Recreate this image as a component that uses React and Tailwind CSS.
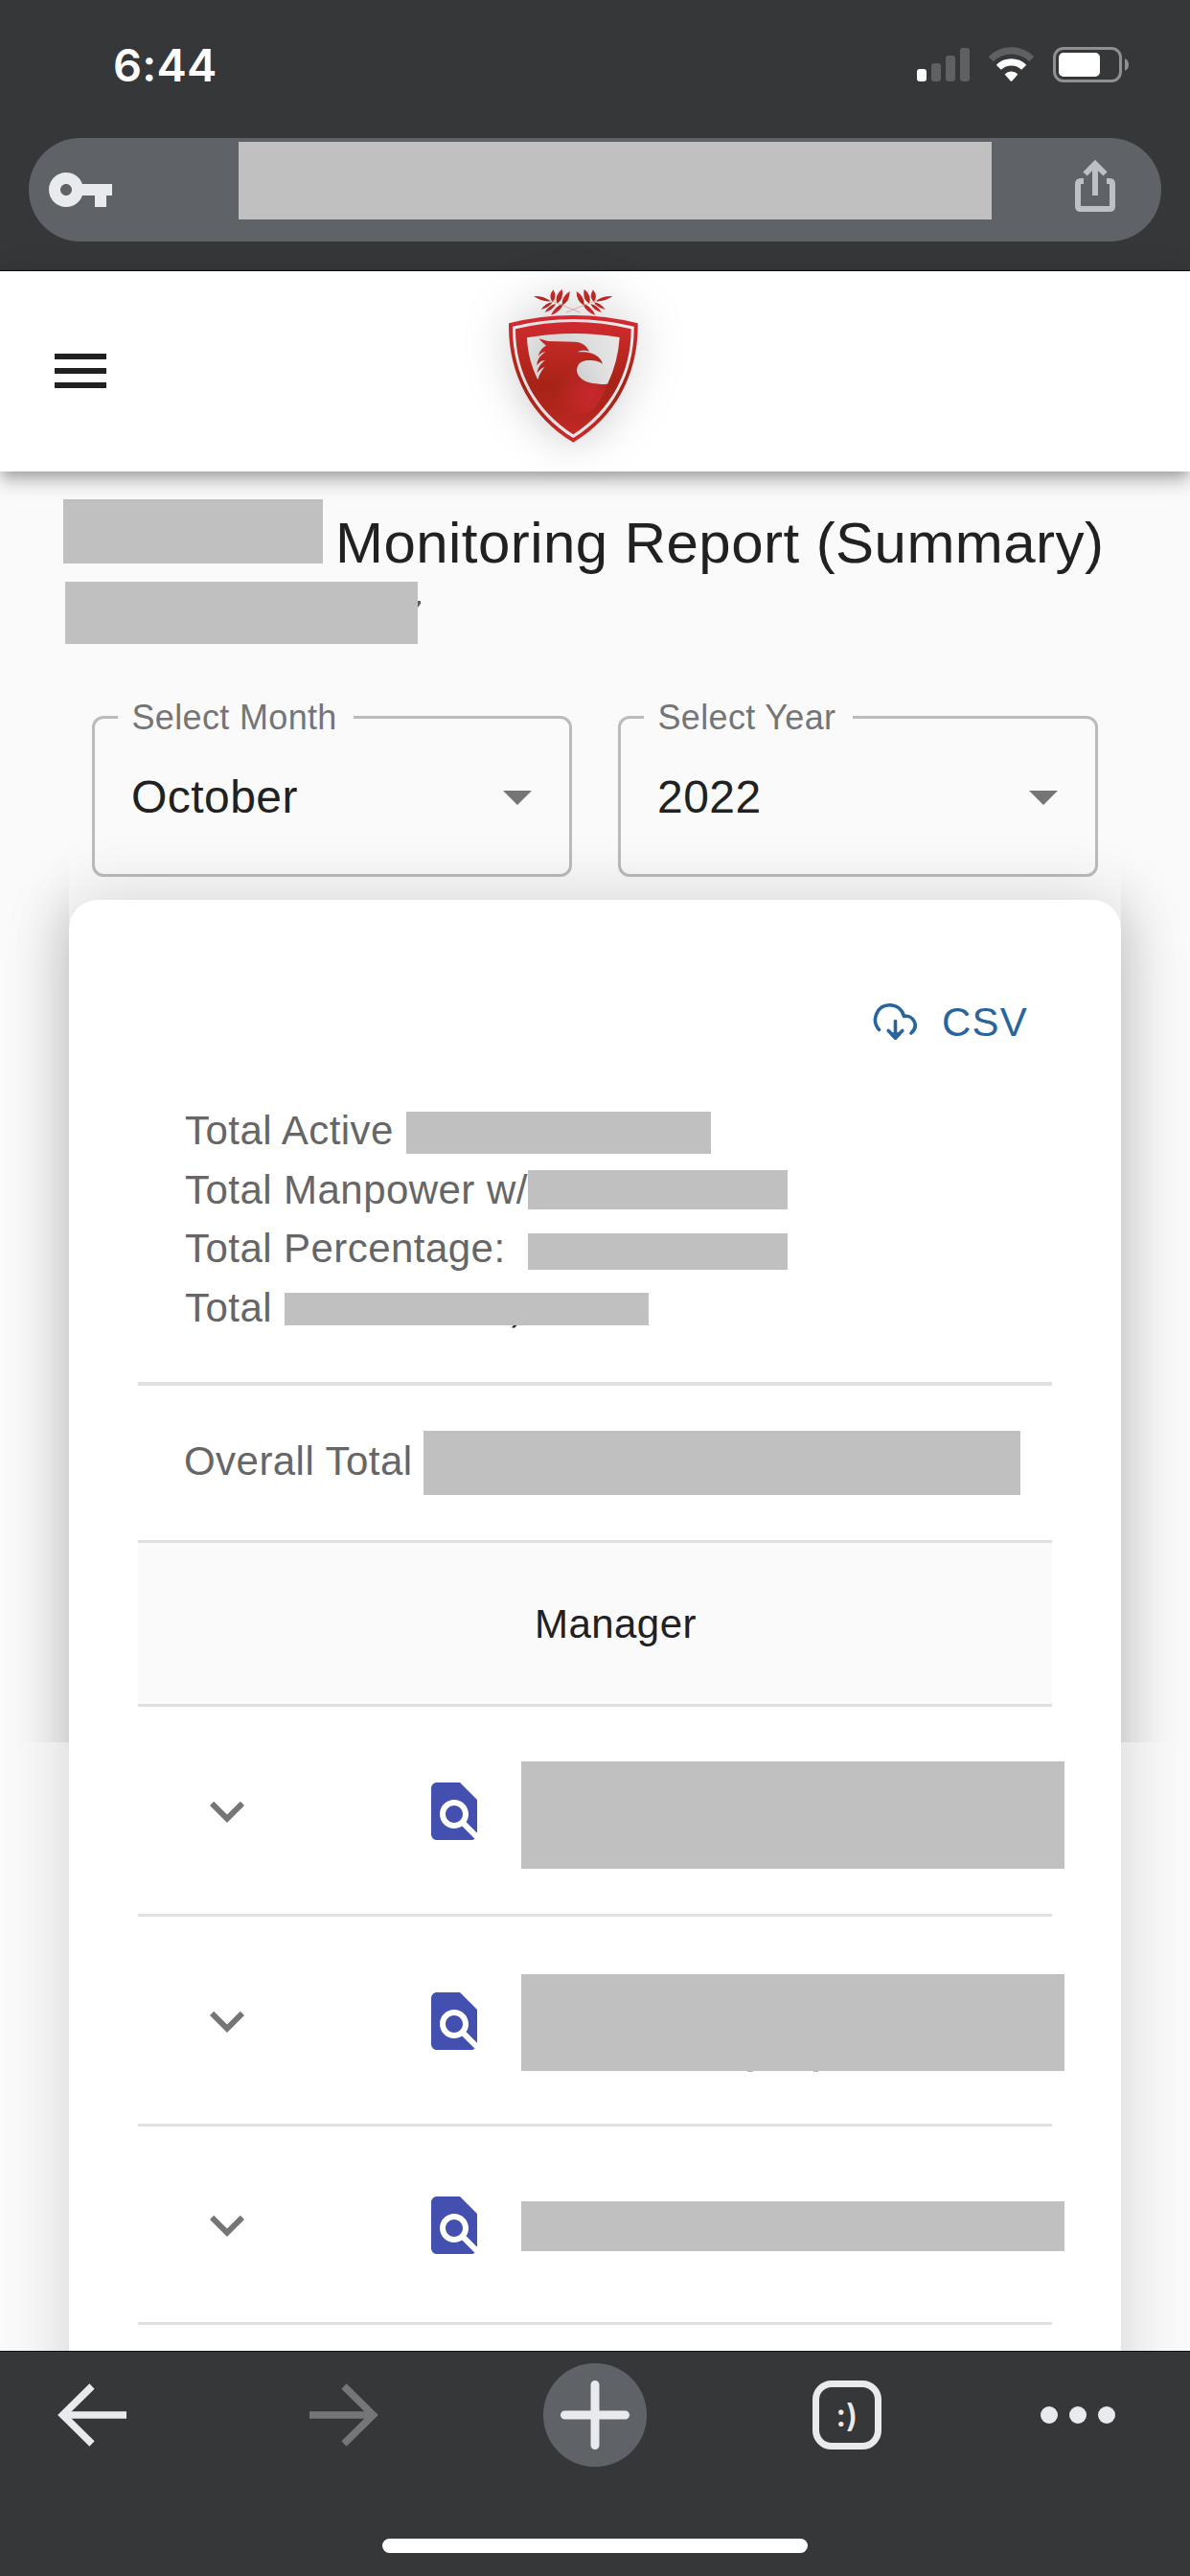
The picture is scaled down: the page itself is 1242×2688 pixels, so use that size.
import React from "react";
import { MdVpnKey, MdMenu, MdArrowDropDown, MdExpandMore, MdFindInPage } from "react-icons/md";

const LEAVES = [
  [224, 103, 171, 87, 8],
  [230, 106, 194, 129, 7],
  [240, 111, 206, 138, 8],
  [264, 111, 225, 147, 10],
  [230, 106, 232, 67, 12],
  [244, 110, 260, 65, 13],
  [260, 116, 284, 72, 12],
];

function leafPath([bx, by, tx, ty, w]) {
  const dx = tx - bx;
  const dy = ty - by;
  const len = Math.hypot(dx, dy);
  const nx = (-dy / len) * w * 1.3;
  const ny = (dx / len) * w * 1.3;
  const mx = bx + dx * 0.45;
  const my = by + dy * 0.45;
  return `M${bx},${by} Q${mx + nx},${my + ny} ${tx},${ty} Q${mx - nx},${my - ny} ${bx},${by}Z`;
}

function Laurel() {
  return (
    <g>
      {LEAVES.map((l, i) => (
        <path key={i} d={leafPath(l)} fill="url(#leaf)" />
      ))}
      <path d="M222 100 L316 138" stroke="#d98a8a" strokeWidth="2" fill="none" />
    </g>
  );
}

function Crest() {
  return (
    <svg
      className="h-[197px] w-[200px] overflow-visible drop-shadow-[0_0_24px_rgba(0,0,0,0.26)]"
      viewBox="0 9 600 591"
    >
      <defs>
        <linearGradient id="shield" x1="0" y1="147" x2="0" y2="545" gradientUnits="userSpaceOnUse">
          <stop offset="0" stopColor="#d42a33" />
          <stop offset="0.25" stopColor="#c02823" />
          <stop offset="0.55" stopColor="#a62317" />
          <stop offset="0.75" stopColor="#b0251c" />
          <stop offset="1" stopColor="#cc2a2c" />
        </linearGradient>
        <linearGradient id="leaf" x1="0" y1="65" x2="0" y2="147" gradientUnits="userSpaceOnUse">
          <stop offset="0" stopColor="#d32a33" />
          <stop offset="0.5" stopColor="#ae251c" />
          <stop offset="1" stopColor="#d32a33" />
        </linearGradient>
        <radialGradient id="glow" cx="350" cy="400" r="115" gradientUnits="userSpaceOnUse">
          <stop offset="0" stopColor="#c6282b" />
          <stop offset="0.3" stopColor="#c4282a" stopOpacity="0.85" />
          <stop offset="1" stopColor="#c4282a" stopOpacity="0" />
        </radialGradient>
      </defs>
      <Laurel />
      <g transform="translate(589 0) scale(-1 1)">
        <Laurel />
      </g>
      <path
        fillRule="evenodd"
        fill="url(#shield)"
        d="M93,172 Q295,122 497,172 C500,325 430,465 295,545 C160,465 90,325 93,172Z
           M105,182 C103,325 170,455 295,531 C420,455 487,325 485,182 Q295,136 105,182Z
           M114,190 Q295,146 476,190 C477,325 412,445 295,520 C178,445 113,325 114,190Z
           M150,217 Q295,192 440,216 Q435,295 402,362 C340,368 308,345 306,322 C306,295 325,288 345,288 C365,288 378,292 387,300 C382,277 355,262 328,262 L308,262 C322,256 335,257 345,260 C335,238 315,230 300,230 L215,228 L188,220 C193,228 203,236 210,242 C195,250 188,262 186,275 C192,266 200,262 209,262 C193,270 182,285 181,303 C190,292 198,288 207,288 C193,298 183,312 182,328 C190,316 198,311 205,309 C195,322 188,332 184,349 C163,305 152,265 150,217Z"
      />
      <path
        fill="url(#glow)"
        d="M306,287 C255,305 225,350 235,410 C240,440 255,455 275,465 L350,450 C375,425 390,395 402,362 C340,368 308,345 306,322 C306,305 312,296 322,290Z"
      />
    </svg>
  );
}

function StatusBar() {
  return (
    <div className="flex h-[144px] items-start justify-between pl-[118px] pr-[62px]">
      <div className="mt-[44px] font-['Inter',sans-serif] text-[47px] font-semibold leading-[48px] tracking-[0.2px] text-white">
        6:44
      </div>
      <div className="mt-[49px] flex items-start">
        <div className="mt-[1px] flex h-[35px] items-end gap-[5px]">
          <div className="h-[13px] w-[10px] rounded-[3px] bg-white" />
          <div className="h-[19px] w-[10px] rounded-[3px] bg-[#5f6062]" />
          <div className="h-[27px] w-[10px] rounded-[3px] bg-[#5f6062]" />
          <div className="h-[35px] w-[10px] rounded-[3px] bg-[#5f6062]" />
        </div>
        <svg className="ml-[19px] h-[37px] w-[49px]" viewBox="0 0 49 37" fill="none">
          <path d="M3.3 12.7 A30 30 0 0 1 45.7 12.7" stroke="#5f6062" strokeWidth="7.2" />
          <path d="M11.3 21.2 A18.8 18.8 0 0 1 37.7 21.2" stroke="#fff" strokeWidth="7.2" />
          <path d="M17.6 28.5 A9.6 9.6 0 0 1 31.4 28.5 L25.3 35.4 Q24.5 36.3 23.7 35.4Z" fill="#fff" />
        </svg>
        <svg className="ml-[19px] h-[37px] w-[81px]" viewBox="0 0 81 37">
          <rect x="1.5" y="1.5" width="69" height="34" rx="9.5" fill="none" stroke="#8f9091" strokeWidth="3" />
          <rect x="6" y="6" width="43" height="25" rx="5" fill="#fff" />
          <path d="M75 12 Q79 14 79 18.5 Q79 23 75 25Z" fill="#8f9091" />
        </svg>
      </div>
    </div>
  );
}

function AddressBar() {
  return (
    <div className="mx-[30px] flex h-[108px] rounded-full bg-[#5f6368]">
      <MdVpnKey className="ml-[18px] mt-[18px] h-[72px] w-[72px] shrink-0 text-[#e8eaed]" />
      <div className="ml-[129px] mt-[4px] h-[81px] w-[786px] bg-[#c0c0c0]" />
      <svg className="ml-[87px] mt-[23px] h-[55px] w-[42px]" viewBox="0 0 42 55" fill="none" stroke="#bdc1c6" strokeWidth="6">
        <path d="M9 22 H6 Q3 22 3 25 V48 Q3 51 6 51 H36 Q39 51 39 48 V25 Q39 22 36 22 H33" />
        <path d="M21 37 V5" />
        <path d="M10.5 14.5 L21 4 L31.5 14.5" />
      </svg>
    </div>
  );
}

function Field({ label, value, notch }) {
  return (
    <div className="relative flex h-[168px] w-[501px] items-center justify-between rounded-[12px] border-[3px] border-black/25 pl-[38px] pr-[18px]">
      <div
        className={`absolute left-[24px] top-[-19px] h-[36px] whitespace-nowrap bg-[#fafafa] pl-[14.5px] text-[36px] leading-[36px] tracking-[0.34px] text-[#757575] ${notch}`}
      >
        {label}
      </div>
      <div className="pt-[2px] text-[48px] leading-[48px] tracking-[0.45px]">{value}</div>
      <MdArrowDropDown className="h-[72px] w-[72px] text-[#757575]" />
    </div>
  );
}

function Stat({ label, labelWidth, block, children }) {
  return (
    <div className="relative flex h-[61.5px] items-start leading-[61.5px]">
      <div className={`shrink-0 whitespace-nowrap pt-[1px] ${labelWidth}`}>{label}</div>
      <div className={`bg-[#c0c0c0] ${block}`} />
      {children}
    </div>
  );
}

function Row({ height, block, children }) {
  return (
    <div className={`flex items-start border-b-[3px] border-[#e0e0e0] pl-[57px] ${height}`}>
      <MdExpandMore className="h-[72px] w-[72px] shrink-0 text-[#757575]" />
      <MdFindInPage className="ml-[165px] h-[72px] w-[72px] shrink-0 text-[#4350af]" />
      <div className={`relative ml-[34px] w-[567px] shrink-0 bg-[#c0c0c0] ${block}`}>{children}</div>
    </div>
  );
}

function BottomBar() {
  return (
    <div className="relative h-[235px] border-t border-[#111213] bg-[#363739]">
      <div className="flex h-[132px] items-center pl-[60px]">
        <svg className="h-[66px] w-[72px]" viewBox="0 0 72 66" fill="none" stroke="#e8eaed" strokeWidth="7.5">
          <path d="M72 33 H8" />
          <path d="M36 3 L5.5 33 L36 63" />
        </svg>
        <svg className="ml-[191px] h-[66px] w-[72px]" viewBox="0 0 72 66" fill="none" stroke="#757678" strokeWidth="7.5">
          <path d="M0 33 H64" />
          <path d="M36 3 L66.5 33 L36 63" />
        </svg>
        <div className="ml-[172px] flex h-[108px] w-[108px] items-center justify-center rounded-full bg-[#5f6368]">
          <svg className="h-[72px] w-[72px]" viewBox="0 0 72 72" stroke="#e8eaed" strokeWidth="9" strokeLinecap="round">
            <path d="M36 4.5 V67.5 M4.5 36 H67.5" />
          </svg>
        </div>
        <div className="ml-[173px] flex h-[72px] w-[72px] items-center justify-center rounded-[20px] border-[7.5px] border-[#e8eaed] font-['Inter',sans-serif] text-[33px] font-semibold leading-[31px] text-[#e8eaed]">
          :)
        </div>
        <div className="ml-[166px] flex gap-[12px]">
          <div className="h-[18px] w-[18px] rounded-full bg-[#e8eaed]" />
          <div className="h-[18px] w-[18px] rounded-full bg-[#e8eaed]" />
          <div className="h-[18px] w-[18px] rounded-full bg-[#e8eaed]" />
        </div>
      </div>
      <div className="mx-auto mt-[63px] h-[15px] w-[444px] rounded-full bg-white" />
    </div>
  );
}

export default function App() {
  return (
    <div className="flex h-[2688px] w-[1242px] flex-col overflow-hidden bg-[#fafafa] font-['Liberation_Sans',Arial,sans-serif] text-[#212121]">
      <div className="h-[283px] shrink-0 border-b border-[#111213] bg-[#363739]">
        <StatusBar />
        <AddressBar />
      </div>

      <header className="relative z-10 flex h-[209px] shrink-0 items-start bg-white shadow-[0_6px_12px_-3px_rgba(0,0,0,0.2),0_12px_15px_rgba(0,0,0,0.14),0_3px_30px_rgba(0,0,0,0.12)]">
        <MdMenu className="ml-[48px] mt-[68px] h-[72px] w-[72px]" />
        <div className="ml-[380px]">
          <Crest />
        </div>
      </header>

      <main className="relative h-[1961px] shrink-0 overflow-hidden">
        <div className="absolute inset-x-0 top-0 h-[1326px] overflow-hidden">
          <div className="mx-[72px] mt-[447px] h-[2000px] rounded-[30px] shadow-[0_0_60px_rgba(0,0,0,0.16)]" />
        </div>

        <div className="relative mx-[72px] bg-[#fafafa] pt-[26px]">
          <div className="-ml-[6px] flex h-[89px] items-start">
            <div className="mt-[3px] h-[67px] w-[271px] shrink-0 bg-[#c0c0c0]" />
            <h1 className="ml-[13px] mt-[1px] whitespace-nowrap text-[60px] leading-[96px] tracking-[0.45px]">
              Monitoring Report (Summary)
            </h1>
          </div>
          <div className="-ml-[4px] flex items-start">
            <div className="h-[65px] w-[368px] bg-[#c0c0c0]" />
            <svg className="mt-[20px] h-[7px] w-[3px]" viewBox="0 0 3 7">
              <path d="M0 0 H3 V3 L0 7Z" fill="#5c5c5c" />
            </svg>
          </div>

          <div className="ml-[24px] mt-[75px] flex gap-[48px]">
            <Field label="Select Month" value="October" notch="w-[246px]" />
            <Field label="Select Year" value="2022" notch="w-[218px]" />
          </div>

          <section className="mt-[24px] h-[1600px] rounded-t-[30px] bg-white px-[72px] pt-[106px] shadow-[0_0_72px_rgba(0,0,0,0.16)]">
            <div className="flex h-[43px] items-center justify-end pr-[25px] text-[#28659c]">
              <svg className="h-[43px] w-[49px]" viewBox="0 0 49 43" fill="none" stroke="currentColor" strokeWidth="3.6" strokeLinecap="round" strokeLinejoin="round">
                <path d="M7.5 29.5 C-1 20 5 3.8 18.5 3.8 C26 3.8 31.5 8.5 33.5 15.5 C42.5 13.5 50 25 41 33" />
                <path d="M24.5 20.5 V38" />
                <path d="M17.2 30.5 L24.5 38 L31.8 30.5" />
                <path d="M20.5 34 L24.5 38 L28.5 34Z" fill="currentColor" />
              </svg>
              <div className="ml-[24px] text-[42px] leading-[42px] tracking-[1.2px]">CSV</div>
            </div>

            <div className="ml-[49px] mt-[60px] h-[294px] text-[42px] tracking-[0.45px] text-[#666666]">
              <Stat label="Total Active" labelWidth="w-[231px]" block="mt-[12px] h-[44px] w-[318px]" />
              <Stat label="Total Manpower w/" labelWidth="w-[358px]" block="mt-[11.5px] h-[41px] w-[271px]" />
              <Stat label="Total Percentage:" labelWidth="w-[358px]" block="mt-[16px] h-[38px] w-[271px]" />
              <Stat label="Total" labelWidth="w-[104px]" block="mt-[16.5px] h-[34px] w-[380px]">
                <svg className="absolute left-[341px] top-[50.5px] h-[3px] w-[6px]" viewBox="0 0 6 3">
                  <path d="M2 0 H5.5 L3 2.5 H0Z" fill="#222" />
                </svg>
              </Stat>
            </div>

            <div className="flex h-[168px] items-center border-b-[3px] border-t-4 border-[#e0e0e0] pl-[48px] text-[42px] tracking-[0.45px] text-[#666666]">
              <div className="-mt-[5px] w-[250px] shrink-0 whitespace-nowrap">Overall Total</div>
              <div className="h-[67px] w-[623px] shrink-0 bg-[#c0c0c0]" />
            </div>
            <div className="flex h-[171px] items-center border-b-[3px] border-[#e0e0e0] bg-[#fafafa] pl-[414px] pt-[2px] text-[42px] leading-[60px] tracking-[0.45px]">
              Manager
            </div>

            <Row height="h-[219px] pt-[73px]" block="-mt-[16px] h-[112px]" />
            <Row height="h-[219px] pt-[73px]" block="-mt-[13px] h-[101px]">
              <div className="absolute left-[236px] top-full h-px w-[6px] bg-[#b5b5b5]" />
              <div className="absolute left-[305px] top-full h-px w-[5px] bg-[#b5b5b5]" />
            </Row>
            <Row height="h-[207px] pt-[67px]" block="mt-[11px] h-[52px]" />
          </section>
        </div>
      </main>

      <BottomBar />
    </div>
  );
}
